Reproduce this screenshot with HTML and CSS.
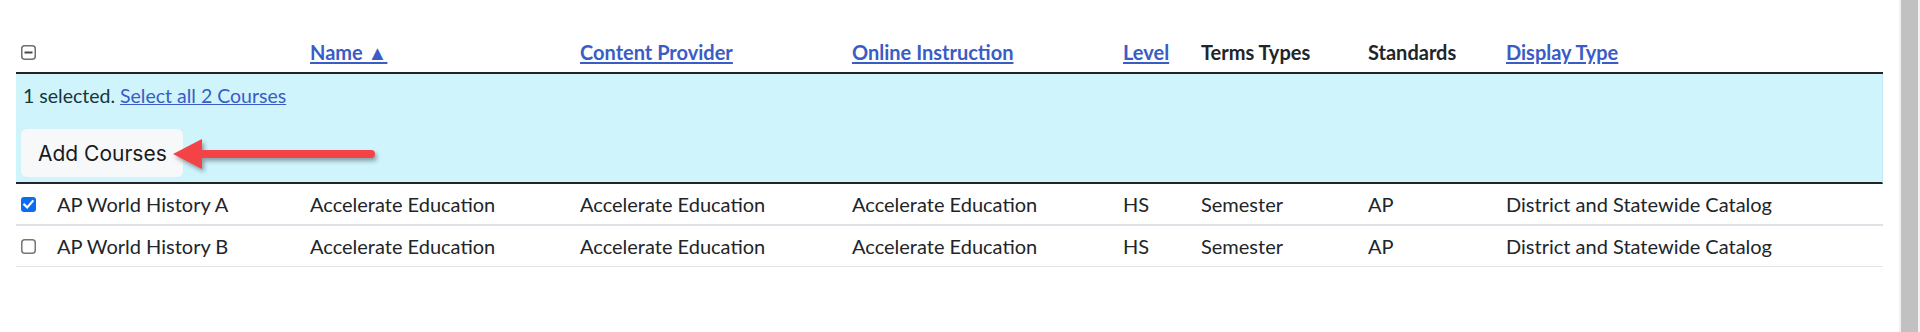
FILE: index.html
```html
<!DOCTYPE html>
<html lang="en">
<head>
<meta charset="utf-8">
<title>Courses</title>
<link rel="stylesheet" href="styles.css">
</head>
<body>
<div class="page">
  <main class="main">
    <div class="table">
      <div class="row head">
        <div class="cell check">
          <svg class="box" width="15" height="15" viewBox="0 0 15 15"><rect x="0.75" y="0.75" width="13.5" height="13.5" rx="3" fill="#fff" stroke="#6f6f6f" stroke-width="1.5"/><rect x="3.5" y="6.5" width="8" height="2" fill="#4a4a4a"/></svg>
        </div>
        <div class="cell"></div>
        <div class="cell"><a href="#" class="sort">Name ▲</a></div>
        <div class="cell"><a href="#" class="sort">Content Provider</a></div>
        <div class="cell"><a href="#" class="sort">Online Instruction</a></div>
        <div class="cell"><a href="#" class="sort">Level</a></div>
        <div class="cell">Terms Types</div>
        <div class="cell">Standards</div>
        <div class="cell"><a href="#" class="sort">Display Type</a></div>
      </div>
      <div class="alert">
        <p class="alert-text">1 selected. <a href="#" class="select-all">Select all 2 Courses</a></p>
        <button class="btn" type="button">Add Courses</button>
        <svg class="arrow" width="215" height="42" viewBox="0 0 215 42">
          <line x1="28" y1="19" x2="201" y2="19" stroke="#f44346" stroke-width="8" stroke-linecap="round"/>
          <polygon points="3,19 32,4 32,34" fill="#f44346"/>
        </svg>
      </div>
      <div class="row body first">
        <div class="cell check">
          <svg class="box" width="15" height="15" viewBox="0 0 15 15"><rect x="0" y="0" width="15" height="15" rx="3" fill="#0b6cf2"/><path d="M3.3 7.6 L6.2 10.4 L11.6 4.2" fill="none" stroke="#fff" stroke-width="2.2" stroke-linecap="square"/></svg>
        </div>
        <div class="cell">AP World History A</div>
        <div class="cell">Accelerate Education</div>
        <div class="cell">Accelerate Education</div>
        <div class="cell">Accelerate Education</div>
        <div class="cell">HS</div>
        <div class="cell">Semester</div>
        <div class="cell">AP</div>
        <div class="cell">District and Statewide Catalog</div>
      </div>
      <div class="row body last">
        <div class="cell check">
          <svg class="box" width="15" height="15" viewBox="0 0 15 15"><rect x="0.75" y="0.75" width="13.5" height="13.5" rx="3" fill="#fff" stroke="#767676" stroke-width="1.5"/></svg>
        </div>
        <div class="cell">AP World History B</div>
        <div class="cell">Accelerate Education</div>
        <div class="cell">Accelerate Education</div>
        <div class="cell">Accelerate Education</div>
        <div class="cell">HS</div>
        <div class="cell">Semester</div>
        <div class="cell">AP</div>
        <div class="cell">District and Statewide Catalog</div>
      </div>
    </div>
  </main>
  <div class="scrollbar"><div class="thumb"></div></div>
</div>
</body>
</html>
```

FILE: styles.css
```css
* { box-sizing: border-box; }
html, body { margin: 0; padding: 0; background: #fff; }
body {
  font-family: Lato, "Liberation Sans", sans-serif;
  color: #212529;
}
.page {
  display: flex;
  height: 332px;
  overflow: hidden;
}
.main {
  flex: 1;
  padding: 32px 16px 0 16px;
}
.scrollbar {
  width: 21px;
  background: #f1f1f1;
  padding: 0 2px 0 2px;
}
.thumb {
  height: 100%;
  background: #c1c1c1;
}
.row {
  display: grid;
  grid-template-columns: 33px 253px 270px 272px 271px 78px 167px 138px 1fr;
}
.cell {
  padding: 8px;
  font-size: 20px;
  line-height: 24px;
  white-space: nowrap;
}
.cell.check {
  padding: 8px 0 8px 5px;
  display: flex;
  align-items: center;
}
.box { display: block; }
.head {
  border-bottom: 2px solid #212529;
}
.head .cell { font-weight: 700; }
.sort {
  color: #3a5cc5;
  text-decoration: underline;
  text-underline-offset: 2px;
}
.alert {
  position: relative;
  background: #cff4fc;
  border-bottom: 2px solid #212529;
  border-right: 1px solid #bdebf7;
  padding: 10px 0 5px 5px;
  display: flex;
  flex-direction: column;
  align-items: flex-start;
}
.alert-text {
  margin: 0 0 21px 0;
  padding-left: 2px;
  font-size: 19.5px;
  line-height: 24px;
  color: #17353a;
}
.select-all {
  color: #3a5cc5;
  text-decoration: underline;
}
.btn {
  height: 48px;
  padding: 0 16px 0 17px;
  border: 0;
  border-radius: 6px;
  background: #f7f8fa;
  font-family: Inter, "Open Sans", sans-serif;
  font-size: 21px;
  color: #1a1a1a;
}
.arrow {
  position: absolute;
  left: 154px;
  top: 61px;
  overflow: visible;
  filter: drop-shadow(2px 3px 2px rgba(0, 0, 0, 0.35));
}
.body .cell { font-weight: 400; }
.first { border-bottom: 2px solid #dee2e6; }
.last { border-bottom: 1px solid #e3e4e6; }
```
